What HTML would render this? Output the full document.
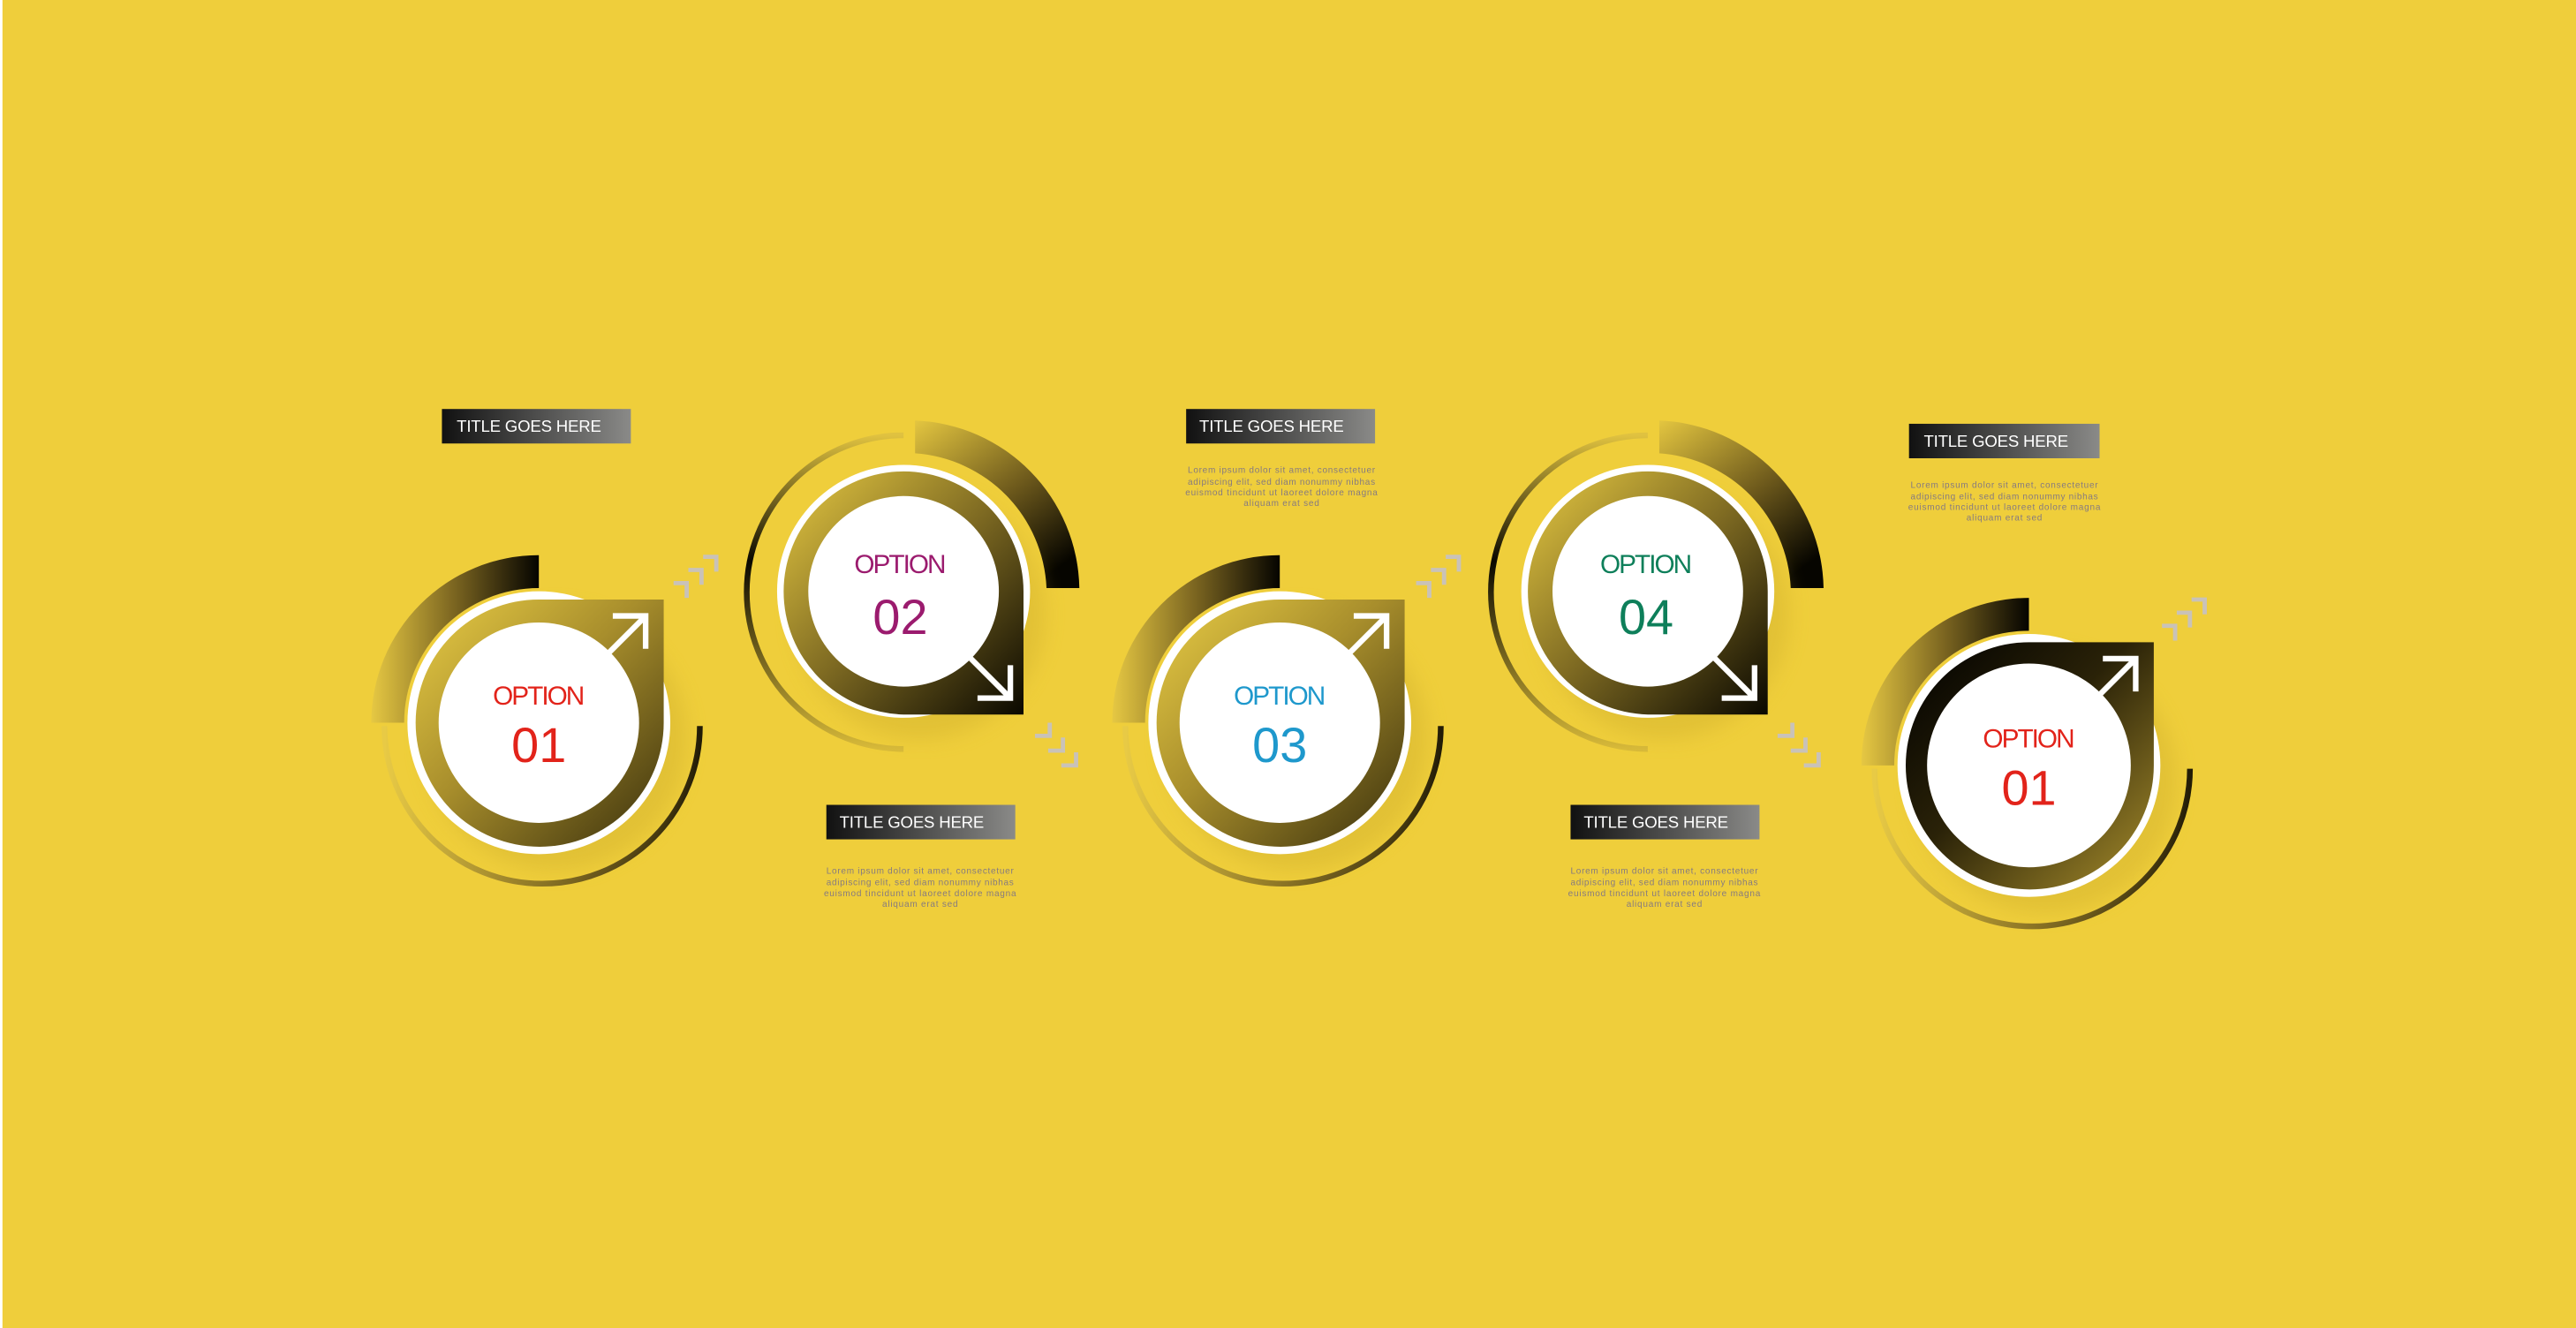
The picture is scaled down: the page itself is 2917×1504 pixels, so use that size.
<!DOCTYPE html>
<html><head><meta charset="utf-8"><style>
html,body{margin:0;padding:0;background:#EFCE3B;}
svg{display:block}
text{font-family:"Liberation Sans",sans-serif}
</style></head><body>
<svg width="2917" height="1504" viewBox="0 0 1568 808.5" preserveAspectRatio="none" xmlns="http://www.w3.org/2000/svg">
<defs>
<linearGradient id="thickA" x1="0" y1="0" x2="1" y2="0"><stop offset="0" stop-color="#e6c843"/><stop offset="0.5" stop-color="#7a6420"/><stop offset="1" stop-color="#050400"/></linearGradient>
<linearGradient id="thickB" x1="0" y1="0" x2="0.7" y2="1"><stop offset="0" stop-color="#e4c640"/><stop offset="0.55" stop-color="#6e5a1c"/><stop offset="1" stop-color="#060500"/></linearGradient>
<linearGradient id="thinA" x1="0" y1="0" x2="1" y2="0"><stop offset="0" stop-color="#e8ca45"/><stop offset="0.5" stop-color="#8a7326"/><stop offset="1" stop-color="#1e1806"/></linearGradient>
<linearGradient id="thinB" x1="0" y1="0" x2="0" y2="1"><stop offset="0" stop-color="#e0c240"/><stop offset="0.4" stop-color="#0a0800"/><stop offset="1" stop-color="#d8ba3a"/></linearGradient>
<linearGradient id="ringA" x1="0" y1="0" x2="1" y2="1"><stop offset="0" stop-color="#e8cc45"/><stop offset="0.45" stop-color="#a88e2c"/><stop offset="1" stop-color="#3a300c"/></linearGradient>
<linearGradient id="ringB" x1="0" y1="0" x2="1" y2="1"><stop offset="0" stop-color="#e6c942"/><stop offset="0.5" stop-color="#7e6a22"/><stop offset="1" stop-color="#0a0800"/></linearGradient>
<linearGradient id="ringC" x1="0" y1="0" x2="1" y2="1"><stop offset="0" stop-color="#000"/><stop offset="0.45" stop-color="#2a2208"/><stop offset="1" stop-color="#a88e2c"/></linearGradient>
<linearGradient id="tb" x1="0" y1="0" x2="1" y2="0"><stop offset="0" stop-color="#111"/><stop offset="1" stop-color="#8a8a88"/></linearGradient>
<filter id="sh" x="-30%" y="-30%" width="160%" height="160%"><feGaussianBlur stdDeviation="6"/></filter>
<g id="chevA" fill="none" stroke="#c9c2b8" stroke-width="2.6">
<path d="M0 16 h8 v9"/><path d="M9 8 h8 v9"/><path d="M18 0 h8 v9"/>
</g>
<g id="chevB" fill="none" stroke="#c9c2b8" stroke-width="2.6">
<path d="M9 0 v8 h-9"/><path d="M17 9 v8 h-9"/><path d="M25 18 v8 h-9"/>
</g>
</defs>
<rect x="0" y="0" width="1568" height="808.5" fill="#EFCE3B"/>
<rect x="0" y="0" width="1.5" height="808.5" fill="#fff"/>

<g transform="translate(328,440)">
<path d="M-102 0 A102 102 0 0 1 0 -102 L0 -82 A82 82 0 0 0 -82 0Z" fill="url(#thickA)"/>
<path d="M-94 2 A96 96 0 0 0 98 2" fill="none" stroke="url(#thinA)" stroke-width="3.5"/>
<circle cx="10" cy="10" r="80" fill="#c9a92a" opacity="0.35" filter="url(#sh)"/>
<circle r="80" fill="#fff"/>
<path d="M0 -75 H76 V0 A75 75 0 0 1 -75 0 A75 75 0 0 1 0 -75Z" fill="url(#ringA)"/>
<circle r="61" fill="#fff"/>
<path d="M26 -26 L65 -65 M45 -65 H65 V-45" fill="none" stroke="#fff" stroke-width="3.4"/>
<text x="0" y="-11" text-anchor="middle" font-size="16" textLength="56" fill="#E2231A">OPTION</text>
<text x="0" y="24" text-anchor="middle" font-size="30" fill="#E2231A">01</text>
</g>
<use href="#chevA" transform="translate(410,339)"/>

<g transform="translate(779,440)">
<path d="M-102 0 A102 102 0 0 1 0 -102 L0 -82 A82 82 0 0 0 -82 0Z" fill="url(#thickA)"/>
<path d="M-94 2 A96 96 0 0 0 98 2" fill="none" stroke="url(#thinA)" stroke-width="3.5"/>
<circle cx="10" cy="10" r="80" fill="#c9a92a" opacity="0.35" filter="url(#sh)"/>
<circle r="80" fill="#fff"/>
<path d="M0 -75 H76 V0 A75 75 0 0 1 -75 0 A75 75 0 0 1 0 -75Z" fill="url(#ringA)"/>
<circle r="61" fill="#fff"/>
<path d="M26 -26 L65 -65 M45 -65 H65 V-45" fill="none" stroke="#fff" stroke-width="3.4"/>
<text x="0" y="-11" text-anchor="middle" font-size="16" textLength="56" fill="#1E98CC">OPTION</text>
<text x="0" y="24" text-anchor="middle" font-size="30" fill="#1E98CC">03</text>
</g>
<use href="#chevA" transform="translate(862,339)"/>

<g transform="translate(1235,466)">
<path d="M-102 0 A102 102 0 0 1 0 -102 L0 -82 A82 82 0 0 0 -82 0Z" fill="url(#thickA)"/>
<path d="M-94 2 A96 96 0 0 0 98 2" fill="none" stroke="url(#thinA)" stroke-width="3.5"/>
<circle cx="10" cy="10" r="80" fill="#c9a92a" opacity="0.35" filter="url(#sh)"/>
<circle r="80" fill="#fff"/>
<path d="M0 -75 H76 V0 A75 75 0 0 1 -75 0 A75 75 0 0 1 0 -75Z" fill="url(#ringC)"/>
<circle r="62" fill="#fff"/>
<path d="M26 -26 L65 -65 M45 -65 H65 V-45" fill="none" stroke="#fff" stroke-width="3.4"/>
<text x="0" y="-11" text-anchor="middle" font-size="16" textLength="56" fill="#E2231A">OPTION</text>
<text x="0" y="24" text-anchor="middle" font-size="30" fill="#E2231A">01</text>
</g>
<use href="#chevA" transform="translate(1316,365)"/>

<g transform="translate(550,360)">
<path d="M7 -104 A104 104 0 0 1 107 -2 L87 -2 A86 86 0 0 0 7 -84Z" fill="url(#thickB)"/>
<path d="M0 -95 A95 95 0 0 0 0 96" fill="none" stroke="url(#thinB)" stroke-width="3.5"/>
<circle cx="10" cy="14" r="76" fill="#c9a92a" opacity="0.35" filter="url(#sh)"/>
<circle r="77" fill="#fff"/>
<path d="M-73 0 A73 73 0 0 1 73 0 V75 H0 A75 75 0 0 1 -73 0Z" fill="url(#ringB)"/>
<circle r="58" fill="#fff"/>
<path d="M26 26 L65 65 M45 65 H65 V45" fill="none" stroke="#fff" stroke-width="3.4"/>
<text x="-2" y="-11" text-anchor="middle" font-size="16" textLength="56" fill="#9B1B6E">OPTION</text>
<text x="-2" y="26" text-anchor="middle" font-size="30" fill="#9B1B6E">02</text>
</g>
<use href="#chevB" transform="translate(630,440)"/>

<g transform="translate(1003,360)">
<path d="M7 -104 A104 104 0 0 1 107 -2 L87 -2 A86 86 0 0 0 7 -84Z" fill="url(#thickB)"/>
<path d="M0 -95 A95 95 0 0 0 0 96" fill="none" stroke="url(#thinB)" stroke-width="3.5"/>
<circle cx="10" cy="14" r="76" fill="#c9a92a" opacity="0.35" filter="url(#sh)"/>
<circle r="77" fill="#fff"/>
<path d="M-73 0 A73 73 0 0 1 73 0 V75 H0 A75 75 0 0 1 -73 0Z" fill="url(#ringB)"/>
<circle r="58" fill="#fff"/>
<path d="M26 26 L65 65 M45 65 H65 V45" fill="none" stroke="#fff" stroke-width="3.4"/>
<text x="-1" y="-11" text-anchor="middle" font-size="16" textLength="56" fill="#0E7F5A">OPTION</text>
<text x="-1" y="26" text-anchor="middle" font-size="30" fill="#0E7F5A">04</text>
</g>
<use href="#chevB" transform="translate(1082,440)"/>

<g font-size="10" fill="#fff">
<rect x="269" y="249" width="115" height="21" fill="url(#tb)"/><text x="278" y="263" textLength="88">TITLE GOES HERE</text>
<rect x="503" y="490" width="115" height="21" fill="url(#tb)"/><text x="511" y="504" textLength="88">TITLE GOES HERE</text>
<rect x="722" y="249" width="115" height="21" fill="url(#tb)"/><text x="730" y="263" textLength="88">TITLE GOES HERE</text>
<rect x="956" y="490" width="115" height="21" fill="url(#tb)"/><text x="964" y="504" textLength="88">TITLE GOES HERE</text>
<rect x="1162" y="258" width="116" height="21" fill="url(#tb)"/><text x="1171" y="272" textLength="88">TITLE GOES HERE</text>
</g>
<g font-size="5.4" fill="#857a80" text-anchor="middle">
<text x="560" y="532" textLength="114">Lorem ipsum dolor sit amet, consectetuer</text>
<text x="560" y="539" textLength="114">adipiscing elit, sed diam nonummy nibhas</text>
<text x="560" y="545.5" textLength="117">euismod tincidunt ut laoreet dolore magna</text>
<text x="560" y="552" textLength="46">aliquam erat  sed</text>
<text x="780" y="288" textLength="114">Lorem ipsum dolor sit amet, consectetuer</text>
<text x="780" y="295" textLength="114">adipiscing elit, sed diam nonummy nibhas</text>
<text x="780" y="301.5" textLength="117">euismod tincidunt ut laoreet dolore magna</text>
<text x="780" y="308" textLength="46">aliquam erat  sed</text>
<text x="1013" y="532" textLength="114">Lorem ipsum dolor sit amet, consectetuer</text>
<text x="1013" y="539" textLength="114">adipiscing elit, sed diam nonummy nibhas</text>
<text x="1013" y="545.5" textLength="117">euismod tincidunt ut laoreet dolore magna</text>
<text x="1013" y="552" textLength="46">aliquam erat  sed</text>
<text x="1220" y="297" textLength="114">Lorem ipsum dolor sit amet, consectetuer</text>
<text x="1220" y="304" textLength="114">adipiscing elit, sed diam nonummy nibhas</text>
<text x="1220" y="310.5" textLength="117">euismod tincidunt ut laoreet dolore magna</text>
<text x="1220" y="317" textLength="46">aliquam erat  sed</text>
</g>
</svg>
</body></html>
